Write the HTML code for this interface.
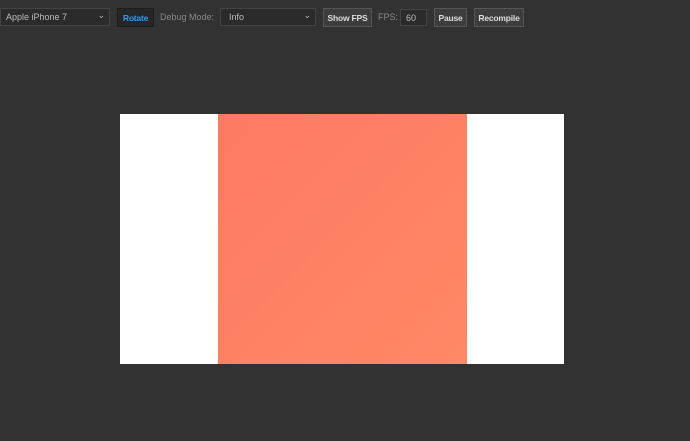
<html><head><style>
body{margin:0;width:690px;height:441px;background:#323232;font-family:"Liberation Sans",sans-serif;font-size:9px;position:relative;overflow:hidden}
.e{position:absolute;box-sizing:border-box}
.sel{background:#2b2b2b;border:1px solid #444;color:#bbb;padding:3px 0 0 5px;height:18px;top:8px}
.btn{background:#3d3d3d;border:1px solid #555;color:#ddd;font-weight:bold;text-align:center;padding-top:4px;height:19px;top:8px;font-size:8.5px;letter-spacing:-0.2px}
.lbl{color:#888;top:12px}
.ch{position:absolute;right:4px;top:1px;color:#bbb;font-size:9px}
</style></head><body>
<div class="e sel" style="left:0;width:110px">Apple iPhone 7<span class="ch">⌄</span></div>
<div class="e btn" style="left:117px;width:37px;background:#262626;color:#2d9cf0;border-color:#1e1e1e">Rotate</div>
<div class="e lbl" style="left:160px">Debug Mode:</div>
<div class="e sel" style="left:220px;width:96px;padding-left:8px">Info<span class="ch">⌄</span></div>
<div class="e btn" style="left:323px;width:49px">Show FPS</div>
<div class="e lbl" style="left:378px">FPS:</div>
<div class="e sel" style="left:400px;width:27px;height:17px;top:9px">60</div>
<div class="e btn" style="left:434px;width:33px">Pause</div>
<div class="e btn" style="left:474px;width:50px">Recompile</div>
<div class="e" style="left:120px;top:114px;width:444px;height:250px;background:#fff"></div>
<div class="e" style="left:218px;top:114px;width:249px;height:250px;background:linear-gradient(135deg,#fe7a62,#ff8866)"></div>
</body></html>
